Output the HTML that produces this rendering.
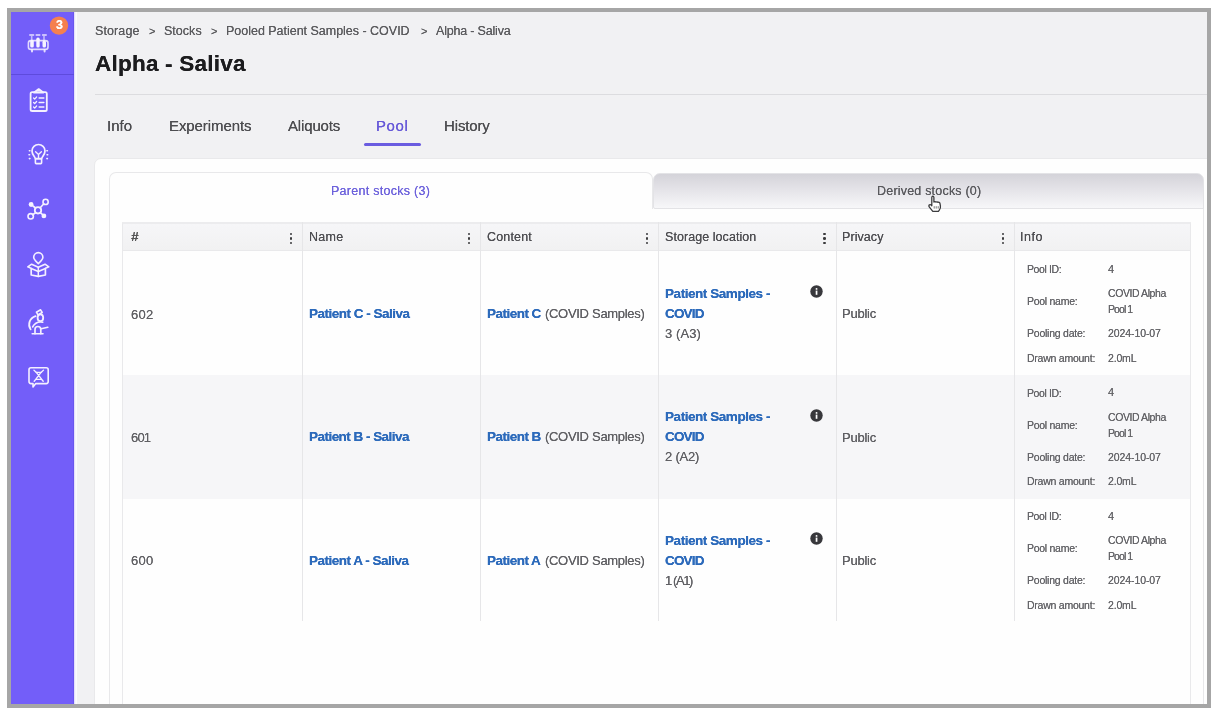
<!DOCTYPE html>
<html><head><meta charset="utf-8"><style>
html,body{margin:0;padding:0;width:1217px;height:712px;overflow:hidden;background:#fff;}
#frame{position:absolute;left:7px;top:8px;width:1204px;height:700px;background:#a6a6a6;}
#app{position:absolute;left:11px;top:12px;width:1196px;height:692px;background:#f1f1f3;overflow:hidden;font-family:"Liberation Sans", sans-serif;filter:blur(0.35px);}
.b{position:absolute;}
.t{position:absolute;white-space:nowrap;line-height:0;font-family:"Liberation Sans", sans-serif;will-change:transform;text-shadow:0 0 0.6px currentColor;}
</style></head><body>
<div id="frame"></div>
<div id="app">
<div class="b" style="left:0px;top:0px;width:63px;height:692px;background:#735ef9;"></div>
<div class="b" style="left:61.5px;top:0px;width:1.5px;height:692px;background:#6a55ee;"></div>
<div class="b" style="left:0px;top:61.5px;width:63px;height:1.5px;background:#5e4bdc;"></div>
<div class="b" style="left:63px;top:0px;width:3px;height:692px;background:linear-gradient(90deg,#d9d3fb,#fbfbfd 60%);"></div>
<div class="b" style="left:84px;top:82px;width:1112px;height:1px;background:#dcdcdf;"></div>
<div class="b" style="left:353px;top:131px;width:56.5px;height:3px;background:#6a5ce0;border-radius:1.5px;"></div>
<div class="b" style="left:82.5px;top:146px;width:1136.5px;height:582px;background:#fefefe;border-radius:7px;border:1px solid #e9e9eb;box-sizing:border-box;"></div>
<div class="b" style="left:98px;top:196px;width:1095px;height:552px;background:#fefefe;border:1px solid #e8e8ea;border-top:none;box-sizing:border-box;"></div>
<div class="b" style="left:98px;top:160.4px;width:544px;height:36.599999999999994px;background:#fefefe;border:1px solid #e8e8ea;border-bottom:none;border-radius:7px 7px 0 0;box-sizing:border-box;"></div>
<div class="b" style="left:642px;top:161px;width:551px;height:36px;background:linear-gradient(#d4d3d9,#e4e3e8 45%,#f7f7f9);border:1px solid #e3e3e6;border-radius:7px 7px 0 2px;box-sizing:border-box;"></div>
<div class="b" style="left:111px;top:210px;width:1069px;height:538px;background:#fefefe;border:1px solid #e9e9eb;box-sizing:border-box;"></div>
<div class="b" style="left:111px;top:210px;width:1069px;height:29px;background:linear-gradient(#f6f6f8,#f1f1f2);border:1px solid #e9e9eb;border-top:2px solid #ececee;box-sizing:border-box;"></div>
<div class="b" style="left:112px;top:363px;width:1067px;height:124px;background:#f6f6f8;"></div>
<div class="b" style="left:290.5px;top:210px;width:1.0px;height:399px;background:#e6e6e8;"></div>
<div class="b" style="left:468.5px;top:210px;width:1.0px;height:399px;background:#e6e6e8;"></div>
<div class="b" style="left:646.5px;top:210px;width:1.0px;height:399px;background:#e6e6e8;"></div>
<div class="b" style="left:824.5px;top:210px;width:1.0px;height:399px;background:#e6e6e8;"></div>
<div class="b" style="left:1002.5px;top:210px;width:1.0px;height:399px;background:#e6e6e8;"></div>
<div class="b" style="left:278.70px;top:220.50px;width:2.6px;height:2.6px;border-radius:50%;background:#3a3a3c;"></div>
<div class="b" style="left:278.70px;top:225.10px;width:2.6px;height:2.6px;border-radius:50%;background:#3a3a3c;"></div>
<div class="b" style="left:278.70px;top:229.70px;width:2.6px;height:2.6px;border-radius:50%;background:#3a3a3c;"></div>
<div class="b" style="left:456.70px;top:220.50px;width:2.6px;height:2.6px;border-radius:50%;background:#3a3a3c;"></div>
<div class="b" style="left:456.70px;top:225.10px;width:2.6px;height:2.6px;border-radius:50%;background:#3a3a3c;"></div>
<div class="b" style="left:456.70px;top:229.70px;width:2.6px;height:2.6px;border-radius:50%;background:#3a3a3c;"></div>
<div class="b" style="left:634.70px;top:220.50px;width:2.6px;height:2.6px;border-radius:50%;background:#3a3a3c;"></div>
<div class="b" style="left:634.70px;top:225.10px;width:2.6px;height:2.6px;border-radius:50%;background:#3a3a3c;"></div>
<div class="b" style="left:634.70px;top:229.70px;width:2.6px;height:2.6px;border-radius:50%;background:#3a3a3c;"></div>
<div class="b" style="left:812.40px;top:220.50px;width:2.6px;height:2.6px;border-radius:50%;background:#3a3a3c;"></div>
<div class="b" style="left:812.40px;top:225.10px;width:2.6px;height:2.6px;border-radius:50%;background:#3a3a3c;"></div>
<div class="b" style="left:812.40px;top:229.70px;width:2.6px;height:2.6px;border-radius:50%;background:#3a3a3c;"></div>
<div class="b" style="left:990.50px;top:220.50px;width:2.6px;height:2.6px;border-radius:50%;background:#3a3a3c;"></div>
<div class="b" style="left:990.50px;top:225.10px;width:2.6px;height:2.6px;border-radius:50%;background:#3a3a3c;"></div>
<div class="b" style="left:990.50px;top:229.70px;width:2.6px;height:2.6px;border-radius:50%;background:#3a3a3c;"></div>
<svg class="b" style="left:798.70px;top:273.40px" width="13" height="13" viewBox="0 0 13 13"><circle cx="6.5" cy="6.5" r="6.2" fill="#38383c"/><rect x="5.7" y="5.6" width="1.7" height="4.2" fill="#fff"/><circle cx="6.55" cy="3.9" r="0.95" fill="#fff"/></svg>
<svg class="b" style="left:798.70px;top:396.80px" width="13" height="13" viewBox="0 0 13 13"><circle cx="6.5" cy="6.5" r="6.2" fill="#38383c"/><rect x="5.7" y="5.6" width="1.7" height="4.2" fill="#fff"/><circle cx="6.55" cy="3.9" r="0.95" fill="#fff"/></svg>
<svg class="b" style="left:798.70px;top:520.20px" width="13" height="13" viewBox="0 0 13 13"><circle cx="6.5" cy="6.5" r="6.2" fill="#38383c"/><rect x="5.7" y="5.6" width="1.7" height="4.2" fill="#fff"/><circle cx="6.55" cy="3.9" r="0.95" fill="#fff"/></svg>
<svg class="b" style="left:0;top:0" width="63" height="692" viewBox="11 12 63 692">
<g fill="none" stroke="#f4f0ff" stroke-width="1.6" stroke-linecap="round" stroke-linejoin="round">
  <!-- test tube rack -->
 <rect x="28.4" y="40.6" width="19.6" height="8.8" rx="2.4" stroke-opacity="0.85"/>
 <path d="M29.8 35.1h3.8M36.2 35.1h3.6M42.6 35.1h3.6" stroke-width="1.5" stroke-opacity="0.9"/>
 <path d="M32 50v1.4M44.6 50v1.4" stroke-width="2" stroke-opacity="0.85"/>
<!-- clipboard -->
 <rect x="30.6" y="92.2" width="16.2" height="18.8" rx="1.6" stroke-width="1.8"/>
 <path d="M33.8 92.6l4.9-3.6 4.9 3.6z" stroke-width="1.7"/>
 <path d="M33.6 98l1.1 1.1 1.9-2.1M33.6 102.5l1.1 1.1 1.9-2.1M33.6 107l1.1 1.1 1.9-2.1" stroke-width="1.3"/>
 <path d="M39.2 98h4.6M39.2 102.5h4.6M39.2 107h4.6" stroke-width="1.6"/>
 <!-- bulb -->
 <path d="M35.2 158.6c0-2.2-3.2-3.6-3.2-7.6a6.5 6.5 0 0 1 13 0c0 4-3.2 5.4-3.2 7.6z" stroke-width="1.7"/>
 <path d="M35.6 151.8l2.9 2.6 2.9-2.6M38.5 154.4v4" stroke-width="1.4"/>
 <rect x="35.4" y="158.8" width="6.2" height="4.8" rx="0.8" stroke-width="1.6"/>
 <path d="M29.4 150.8h.5M29 154.7h.6M29.4 158.6h.5M46.9 150.8h.5M47.1 154.7h.6M46.9 158.6h.5" stroke-width="1.6"/>
 <!-- network -->
 <circle cx="38" cy="210.3" r="3.2" stroke-width="1.8"/>
 <circle cx="45.6" cy="201.9" r="2.6" stroke-width="1.6"/>
 <circle cx="30.7" cy="216.3" r="2.7" stroke-width="1.6"/>
 <path d="M40.2 207.8l3.4-3.8M35.7 212.6l-3 2.2M35.6 208l-2.6-2M40.3 212.7l2 1.6" stroke-width="1.7"/>
 <!-- box with pin -->
 <path d="M38.3 263.6c-2.6-2.6-4.6-4.2-4.6-6.4a4.6 4.6 0 0 1 9.2 0c0 2.2-2 3.8-4.6 6.4z" stroke-width="1.6"/>
 <path d="M31.2 268.4v6.6l7.1 1.4 7.1-1.4v-6.6" stroke-width="1.7"/>
 <path d="M38.3 267.2v9.2" stroke-width="1.5"/>
 <path d="M31.2 268.4l-3.4-1.6 3.8-2.6 6.7 3 6.7-3 3.8 2.6-3.4 1.6-7.1 3-7.1-3z" stroke-width="1.6"/>
 <!-- microscope -->
 <path d="M36.4 312.2l4.2-2.4 1.6 2.7-4.2 2.4z" stroke-width="1.6"/>
 <ellipse cx="40.4" cy="317.8" rx="2.8" ry="3.4" stroke-width="1.8"/>
 <path d="M35.6 316.2c-6 2-8.2 8-5 13.2" stroke-width="1.8"/>
 <path d="M32.6 327c2.2-4 6.4-5.6 10.2-4.8" stroke-width="1.6"/>
 <path d="M35 333.6v-4.2a2.9 2.9 0 0 1 5.8 0v4.2" stroke-width="1.7"/>
 <path d="M32.2 333.8h10.8M41.2 328.8l6.6-1.6" stroke-width="1.6"/>
 <!-- chat dna -->
 <path d="M31 367.8h15.2a2 2 0 0 1 2 2v11.8a2 2 0 0 1-2 2h-10.4l-2.8 3.4v-3.4h-2a2 2 0 0 1-2-2v-11.8a2 2 0 0 1 2-2z" stroke-width="1.6"/>
 <path d="M34 370.2c4 3 5.6 7 9.2 11M43.4 370.2c-4 3-5.6 7-9.2 11" stroke-width="1.4"/>
 <path d="M36.2 372.4h5M36.4 379.4h5" stroke-width="1.1"/>
</g>
<g fill="#f6f3ff">
 <rect x="30.2" y="39.8" width="3.6" height="7.8" rx="1.6"/>
 <rect x="36.3" y="37.6" width="3.4" height="10" rx="1.6"/>
 <rect x="42.5" y="40.6" width="3.5" height="7" rx="1.6"/>
 <rect x="30.9" y="36" width="1.6" height="5" opacity="0.6"/>
 <rect x="43.2" y="36" width="1.6" height="5" opacity="0.6"/>
 <circle cx="31.1" cy="204.5" r="2.4"/>
 <circle cx="43.9" cy="215.9" r="2.4"/>
</g>
<circle cx="59" cy="25.6" r="9.2" fill="#f5804f"/>
</svg>

<div class="t" style="left:45.30px;top:12.78px;font-size:12.47px;color:#ffffff;font-weight:700;">3</div>
<div class="t" style="left:84.00px;top:19.47px;font-size:12.50px;color:#5b5b5e;letter-spacing:0.112px;">Storage</div>
<div class="t" style="left:137.80px;top:18.69px;font-size:11.00px;color:#5b5b5e;">&gt;</div>
<div class="t" style="left:153.20px;top:19.47px;font-size:12.50px;color:#5b5b5e;letter-spacing:0.028px;">Stocks</div>
<div class="t" style="left:200.40px;top:18.69px;font-size:11.00px;color:#5b5b5e;">&gt;</div>
<div class="t" style="left:215.40px;top:19.47px;font-size:12.50px;color:#5b5b5e;letter-spacing:-0.017px;">Pooled Patient Samples - COVID</div>
<div class="t" style="left:410.00px;top:18.69px;font-size:11.00px;color:#5b5b5e;">&gt;</div>
<div class="t" style="left:424.60px;top:19.47px;font-size:12.50px;color:#5b5b5e;letter-spacing:-0.190px;">Alpha - Saliva</div>
<div class="t" style="left:84.00px;top:52.20px;font-size:22.50px;color:#1c1c1e;font-weight:700;letter-spacing:0.228px;">Alpha - Saliva</div>
<div class="t" style="left:96.20px;top:114.00px;font-size:15.00px;color:#4d4d50;letter-spacing:0.041px;">Info</div>
<div class="t" style="left:157.70px;top:114.00px;font-size:15.00px;color:#4d4d50;letter-spacing:-0.086px;">Experiments</div>
<div class="t" style="left:276.70px;top:114.00px;font-size:15.00px;color:#4d4d50;letter-spacing:-0.152px;">Aliquots</div>
<div class="t" style="left:365.00px;top:114.00px;font-size:15.00px;color:#6658d8;letter-spacing:0.604px;">Pool</div>
<div class="t" style="left:432.70px;top:114.00px;font-size:15.00px;color:#4d4d50;letter-spacing:-0.145px;">History</div>
<div class="t" style="left:320.30px;top:178.87px;font-size:12.50px;color:#6d62dc;letter-spacing:0.274px;">Parent stocks (3)</div>
<div class="t" style="left:865.80px;top:178.77px;font-size:12.50px;color:#5a5a5e;letter-spacing:0.203px;">Derived stocks (0)</div>
<div class="t" style="left:119.90px;top:224.59px;font-size:13.30px;color:#555;font-weight:700;font-style:italic;">#</div>
<div class="t" style="left:297.50px;top:224.67px;font-size:12.50px;color:#4e4e52;letter-spacing:0.269px;">Name</div>
<div class="t" style="left:476.20px;top:224.67px;font-size:12.50px;color:#4e4e52;letter-spacing:0.165px;">Content</div>
<div class="t" style="left:654.30px;top:224.67px;font-size:12.50px;color:#4e4e52;letter-spacing:0.061px;">Storage location</div>
<div class="t" style="left:830.80px;top:224.67px;font-size:12.50px;color:#4e4e52;letter-spacing:0.079px;">Privacy</div>
<div class="t" style="left:1009.00px;top:224.67px;font-size:12.50px;color:#4e4e52;letter-spacing:0.534px;">Info</div>
<div class="t" style="left:119.70px;top:302.69px;font-size:13.00px;color:#606064;letter-spacing:0.320px;">602</div>
<div class="t" style="left:298.40px;top:301.92px;font-size:13.50px;color:#2c6abb;font-weight:700;letter-spacing:-0.496px;">Patient C - Saliva</div>
<div class="t" style="left:476.40px;top:301.92px;font-size:13.50px;color:#2c6abb;font-weight:700;letter-spacing:-0.520px;">Patient C</div>
<div class="t" style="left:534.00px;top:302.09px;font-size:13.00px;color:#606064;letter-spacing:-0.299px;">(COVID Samples)</div>
<div class="t" style="left:654.40px;top:281.72px;font-size:13.50px;color:#2c6abb;font-weight:700;letter-spacing:-0.440px;">Patient Samples -</div>
<div class="t" style="left:654.40px;top:301.72px;font-size:13.50px;color:#2c6abb;font-weight:700;letter-spacing:-0.826px;">COVID</div>
<div class="t" style="left:654.40px;top:321.89px;font-size:13.00px;color:#606064;letter-spacing:0.086px;">3 (A3)</div>
<div class="t" style="left:831.30px;top:302.29px;font-size:13.00px;color:#606064;letter-spacing:-0.241px;">Public</div>
<div class="t" style="left:1015.80px;top:257.16px;font-size:10.50px;color:#656569;letter-spacing:-0.390px;">Pool ID:</div>
<div class="t" style="left:1096.70px;top:257.01px;font-size:10.94px;color:#656569;">4</div>
<div class="t" style="left:1015.80px;top:289.16px;font-size:10.50px;color:#656569;letter-spacing:-0.278px;">Pool name:</div>
<div class="t" style="left:1096.70px;top:281.46px;font-size:10.50px;color:#656569;letter-spacing:-0.419px;">COVID Alpha</div>
<div class="t" style="left:1096.70px;top:297.46px;font-size:10.50px;color:#656569;letter-spacing:-0.927px;">Pool 1</div>
<div class="t" style="left:1015.80px;top:321.36px;font-size:10.50px;color:#656569;letter-spacing:-0.232px;">Pooling date:</div>
<div class="t" style="left:1096.70px;top:321.36px;font-size:10.50px;color:#656569;letter-spacing:-0.086px;">2024-10-07</div>
<div class="t" style="left:1015.80px;top:345.86px;font-size:10.50px;color:#656569;letter-spacing:-0.240px;">Drawn amount:</div>
<div class="t" style="left:1096.70px;top:345.86px;font-size:10.50px;color:#656569;letter-spacing:-0.161px;">2.0mL</div>
<div class="t" style="left:119.70px;top:426.09px;font-size:13.00px;color:#606064;letter-spacing:-0.830px;">601</div>
<div class="t" style="left:298.40px;top:425.32px;font-size:13.50px;color:#2c6abb;font-weight:700;letter-spacing:-0.531px;">Patient B - Saliva</div>
<div class="t" style="left:476.40px;top:425.32px;font-size:13.50px;color:#2c6abb;font-weight:700;letter-spacing:-0.520px;">Patient B</div>
<div class="t" style="left:534.00px;top:425.49px;font-size:13.00px;color:#606064;letter-spacing:-0.299px;">(COVID Samples)</div>
<div class="t" style="left:654.40px;top:405.12px;font-size:13.50px;color:#2c6abb;font-weight:700;letter-spacing:-0.440px;">Patient Samples -</div>
<div class="t" style="left:654.40px;top:425.12px;font-size:13.50px;color:#2c6abb;font-weight:700;letter-spacing:-0.826px;">COVID</div>
<div class="t" style="left:654.40px;top:445.29px;font-size:13.00px;color:#606064;letter-spacing:-0.214px;">2 (A2)</div>
<div class="t" style="left:831.30px;top:425.69px;font-size:13.00px;color:#606064;letter-spacing:-0.241px;">Public</div>
<div class="t" style="left:1015.80px;top:380.56px;font-size:10.50px;color:#656569;letter-spacing:-0.390px;">Pool ID:</div>
<div class="t" style="left:1096.70px;top:380.41px;font-size:10.94px;color:#656569;">4</div>
<div class="t" style="left:1015.80px;top:412.56px;font-size:10.50px;color:#656569;letter-spacing:-0.278px;">Pool name:</div>
<div class="t" style="left:1096.70px;top:404.86px;font-size:10.50px;color:#656569;letter-spacing:-0.419px;">COVID Alpha</div>
<div class="t" style="left:1096.70px;top:420.86px;font-size:10.50px;color:#656569;letter-spacing:-0.927px;">Pool 1</div>
<div class="t" style="left:1015.80px;top:444.76px;font-size:10.50px;color:#656569;letter-spacing:-0.232px;">Pooling date:</div>
<div class="t" style="left:1096.70px;top:444.76px;font-size:10.50px;color:#656569;letter-spacing:-0.086px;">2024-10-07</div>
<div class="t" style="left:1015.80px;top:469.26px;font-size:10.50px;color:#656569;letter-spacing:-0.240px;">Drawn amount:</div>
<div class="t" style="left:1096.70px;top:469.26px;font-size:10.50px;color:#656569;letter-spacing:-0.161px;">2.0mL</div>
<div class="t" style="left:119.70px;top:549.49px;font-size:13.00px;color:#606064;letter-spacing:0.320px;">600</div>
<div class="t" style="left:298.40px;top:548.72px;font-size:13.50px;color:#2c6abb;font-weight:700;letter-spacing:-0.496px;">Patient A - Saliva</div>
<div class="t" style="left:476.40px;top:548.72px;font-size:13.50px;color:#2c6abb;font-weight:700;letter-spacing:-0.520px;">Patient A</div>
<div class="t" style="left:534.00px;top:548.89px;font-size:13.00px;color:#606064;letter-spacing:-0.299px;">(COVID Samples)</div>
<div class="t" style="left:654.40px;top:528.52px;font-size:13.50px;color:#2c6abb;font-weight:700;letter-spacing:-0.440px;">Patient Samples -</div>
<div class="t" style="left:654.40px;top:548.52px;font-size:13.50px;color:#2c6abb;font-weight:700;letter-spacing:-0.826px;">COVID</div>
<div class="t" style="left:654.40px;top:568.69px;font-size:13.00px;color:#606064;letter-spacing:-1.394px;">1 (A1)</div>
<div class="t" style="left:831.30px;top:549.09px;font-size:13.00px;color:#606064;letter-spacing:-0.241px;">Public</div>
<div class="t" style="left:1015.80px;top:503.96px;font-size:10.50px;color:#656569;letter-spacing:-0.390px;">Pool ID:</div>
<div class="t" style="left:1096.70px;top:503.81px;font-size:10.94px;color:#656569;">4</div>
<div class="t" style="left:1015.80px;top:535.96px;font-size:10.50px;color:#656569;letter-spacing:-0.278px;">Pool name:</div>
<div class="t" style="left:1096.70px;top:528.26px;font-size:10.50px;color:#656569;letter-spacing:-0.419px;">COVID Alpha</div>
<div class="t" style="left:1096.70px;top:544.26px;font-size:10.50px;color:#656569;letter-spacing:-0.927px;">Pool 1</div>
<div class="t" style="left:1015.80px;top:568.16px;font-size:10.50px;color:#656569;letter-spacing:-0.232px;">Pooling date:</div>
<div class="t" style="left:1096.70px;top:568.16px;font-size:10.50px;color:#656569;letter-spacing:-0.086px;">2024-10-07</div>
<div class="t" style="left:1015.80px;top:592.66px;font-size:10.50px;color:#656569;letter-spacing:-0.240px;">Drawn amount:</div>
<div class="t" style="left:1096.70px;top:592.66px;font-size:10.50px;color:#656569;letter-spacing:-0.161px;">2.0mL</div>
<svg class="b" style="left:907px;top:181px" width="24" height="24" viewBox="918 193 24 24">
<path d="M932.6 196.2c.8 0 1.3.6 1.3 1.4v4.4c.5-.6 1.6-.6 2.1.1.6-.5 1.6-.4 2 .3.7-.4 1.7-.1 1.9.8l.5 2.6c.3 1.6-.1 3.2-1.1 4.4l-.9 1.2h-5.6l-3.6-4.6c-.5-.6-.4-1.5.2-1.9.6-.4 1.3-.3 1.8.2l.6.7v-8.2c0-.8.6-1.4 1.3-1.4z" fill="#fff" stroke="#3c3c3e" stroke-width="1.3" stroke-linejoin="round"/>
<path d="M934.2 206.2v2.4M936.2 206.2v2.4M938.2 206.2v2.4" stroke="#555" stroke-width="0.8"/>
</svg>

</div>
</body></html>
